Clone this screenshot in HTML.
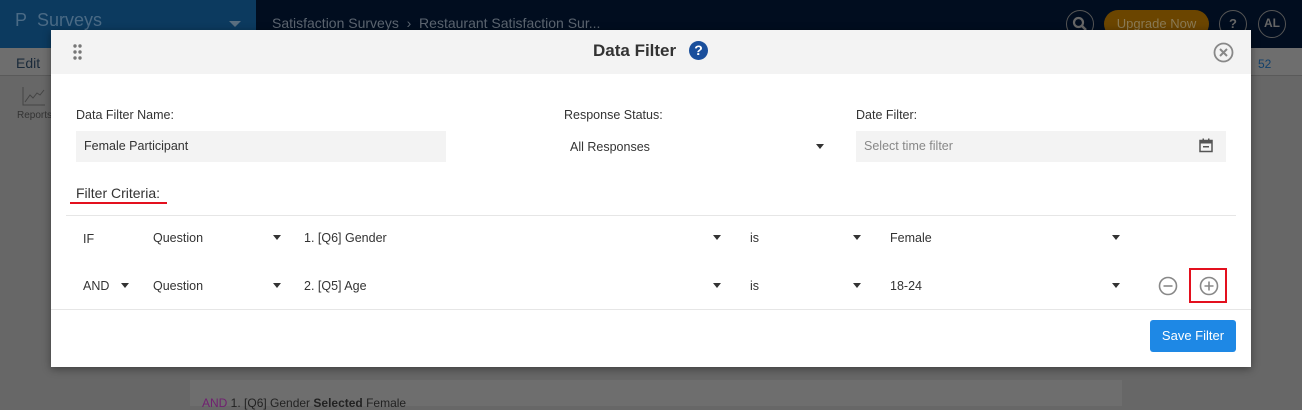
<!DOCTYPE html>
<html><head><style>
*{box-sizing:border-box;margin:0;padding:0}
body{width:1302px;height:406px;overflow:hidden;position:relative;background:#676767;font-family:"Liberation Sans",sans-serif;font-size:13px;color:#333}
.abs{position:absolute}
.top{left:0;top:0;width:1302px;height:48px;background:#010d1f}
.topl{left:0;top:0;width:256px;height:48px;background:#0c3a5f}
.sub{left:0;top:48px;width:1302px;height:28px;background:#6e6e6e;border-bottom:1px solid #5a5a5a}
.modal{left:51px;top:30px;width:1200px;height:337px;background:#fff;box-shadow:0 2px 8px rgba(0,0,0,.4)}
.hdr{left:0;top:0;width:1200px;height:44px;background:#f3f3f3}
.lbl{font-size:12.5px;color:#333}
.inp{background:#f3f3f3;height:31px;font-size:12.5px;line-height:31px;padding-left:8px}
.tri{width:0;height:0;border-left:4px solid transparent;border-right:4px solid transparent;border-top:5px solid #333}
.txt{font-size:12.5px;color:#333}
</style></head><body>
<div class="abs top"></div>
<div class="abs topl"></div>
<div class="abs" style="left:15px;top:10px;color:#4a6a85;font-size:18px">P&nbsp; Surveys</div>
<div class="abs tri" style="left:229px;top:21px;border-top-color:#5a6f80;border-left-width:6px;border-right-width:6px;border-top-width:6px"></div>
<div class="abs" style="left:272px;top:15px;color:#5c6570;font-size:14px">Satisfaction Surveys &nbsp;›&nbsp; Restaurant Satisfaction Sur...</div>
<div class="abs" style="left:1066px;top:10px;width:28px;height:28px;border:1.5px solid #555;border-radius:50%"></div>
<svg class="abs" style="left:1071px;top:15px" width="18" height="18"><circle cx="7.5" cy="7.5" r="4.5" fill="none" stroke="#666" stroke-width="2.2"/><path d="M11 11L15 15" stroke="#666" stroke-width="2.5"/></svg>
<div class="abs" style="left:1104px;top:10px;width:105px;height:28px;background:#6b4500;border-radius:14px;color:#8a7a55;font-size:13px;text-align:center;line-height:28px">Upgrade Now</div>
<div class="abs" style="left:1219px;top:10px;width:28px;height:28px;border:1.5px solid #555;border-radius:50%;color:#666;text-align:center;line-height:25px;font-weight:bold">?</div>
<div class="abs" style="left:1258px;top:10px;width:28px;height:28px;border:1.5px solid #555;border-radius:50%;color:#666;text-align:center;line-height:25px;font-weight:bold;font-size:12px">AL</div>
<div class="abs sub"></div>
<div class="abs" style="left:16px;top:55px;color:#1a2a3a;font-size:14px">Edit</div>
<div class="abs" style="left:1258px;top:57px;color:#12406a;font-size:12px">52</div>
<svg class="abs" style="left:22px;top:86px" width="24" height="20"><path d="M1 1V19H23M3 16L8 9L11 12L15 7L18 9L22 4" fill="none" stroke="#444" stroke-width="1"/></svg>
<div class="abs" style="left:17px;top:110px;color:#333;font-size:10px">Reports</div>
<div class="abs" style="left:190px;top:380px;width:932px;height:26px;background:#6e6e6e"></div>
<div class="abs" style="left:202px;top:396px;font-size:12px;color:#222"><span style="color:#702070">AND</span> 1. [Q6] Gender <b>Selected</b> Female</div>

<div class="abs modal">
 <div class="abs hdr"></div>
 <svg class="abs" style="left:22px;top:14px" width="10" height="16"><g fill="#777"><circle cx="2" cy="2" r="1.7"/><circle cx="7" cy="2" r="1.7"/><circle cx="2" cy="8" r="1.7"/><circle cx="7" cy="8" r="1.7"/><circle cx="2" cy="14" r="1.7"/><circle cx="7" cy="14" r="1.7"/></g></svg>
 <div class="abs" style="left:542px;top:11px;font-size:17px;font-weight:bold;color:#333">Data Filter</div>
 <div class="abs" style="left:638px;top:11px;width:19px;height:19px;border-radius:50%;background:#1a4f9c;color:#fff;font-weight:bold;font-size:14px;text-align:center;line-height:19px">?</div>
 <svg class="abs" style="left:1162px;top:12px" width="21" height="21"><circle cx="10.5" cy="10.5" r="9" fill="none" stroke="#888" stroke-width="1.8"/><path d="M7 7L14 14M14 7L7 14" stroke="#888" stroke-width="2"/></svg>

 <div class="abs lbl" style="left:25px;top:78px">Data Filter Name:</div>
 <div class="abs lbl" style="left:513px;top:78px">Response Status:</div>
 <div class="abs lbl" style="left:805px;top:78px">Date Filter:</div>
 <div class="abs inp" style="left:25px;top:101px;width:370px">Female Participant</div>
 <div class="abs txt" style="left:519px;top:110px">All Responses</div>
 <div class="abs tri" style="left:765px;top:114px"></div>
 <div class="abs inp" style="left:805px;top:101px;width:370px;color:#888">Select time filter</div>
 <svg class="abs" style="left:1148px;top:108px" width="14" height="15"><rect x="1" y="2.5" width="12" height="11" fill="none" stroke="#555" stroke-width="1.5"/><rect x="1" y="2.5" width="12" height="3" fill="#555"/><rect x="3.5" y="0.5" width="1.5" height="3" fill="#555"/><rect x="9" y="0.5" width="1.5" height="3" fill="#555"/><rect x="4" y="8" width="6" height="1.5" fill="#555"/></svg>

 <div class="abs" style="left:25px;top:155px;font-size:14px;color:#333">Filter Criteria:</div>
 <div class="abs" style="left:19px;top:172px;width:97px;height:2px;background:#e3101e"></div>
 <div class="abs" style="left:15px;top:185px;width:1170px;height:1px;background:#e6e6e6"></div>

 <div class="abs txt" style="left:32px;top:202px">IF</div>
 <div class="abs txt" style="left:102px;top:201px">Question</div>
 <div class="abs tri" style="left:222px;top:205px"></div>
 <div class="abs txt" style="left:253px;top:201px">1. [Q6] Gender</div>
 <div class="abs tri" style="left:662px;top:205px"></div>
 <div class="abs txt" style="left:699px;top:201px">is</div>
 <div class="abs tri" style="left:802px;top:205px"></div>
 <div class="abs txt" style="left:839px;top:201px">Female</div>
 <div class="abs tri" style="left:1061px;top:205px"></div>

 <div class="abs txt" style="left:32px;top:249px">AND</div>
 <div class="abs tri" style="left:70px;top:253px"></div>
 <div class="abs txt" style="left:102px;top:249px">Question</div>
 <div class="abs tri" style="left:222px;top:253px"></div>
 <div class="abs txt" style="left:253px;top:249px">2. [Q5] Age</div>
 <div class="abs tri" style="left:662px;top:253px"></div>
 <div class="abs txt" style="left:699px;top:249px">is</div>
 <div class="abs tri" style="left:802px;top:253px"></div>
 <div class="abs txt" style="left:839px;top:249px">18-24</div>
 <div class="abs tri" style="left:1061px;top:253px"></div>
 <svg class="abs" style="left:1107px;top:246px" width="20" height="20"><circle cx="10" cy="10" r="8.5" fill="none" stroke="#888" stroke-width="1.6"/><path d="M5.5 10H14.5" stroke="#888" stroke-width="1.6"/></svg>
 <div class="abs" style="left:1138px;top:238px;width:38px;height:35px;border:2px solid #e3101e"></div>
 <svg class="abs" style="left:1148px;top:246px" width="20" height="20"><circle cx="10" cy="10" r="8.5" fill="none" stroke="#888" stroke-width="1.6"/><path d="M5.5 10H14.5M10 5.5V14.5" stroke="#888" stroke-width="1.6"/></svg>
 <div class="abs" style="left:0;top:279px;width:1200px;height:1px;background:#e6e6e6"></div>
 <div class="abs" style="left:1099px;top:290px;width:86px;height:32px;background:#1e88e5;border-radius:3px;color:#fff;font-size:13px;text-align:center;line-height:32px">Save Filter</div>
</div>
</body></html>
